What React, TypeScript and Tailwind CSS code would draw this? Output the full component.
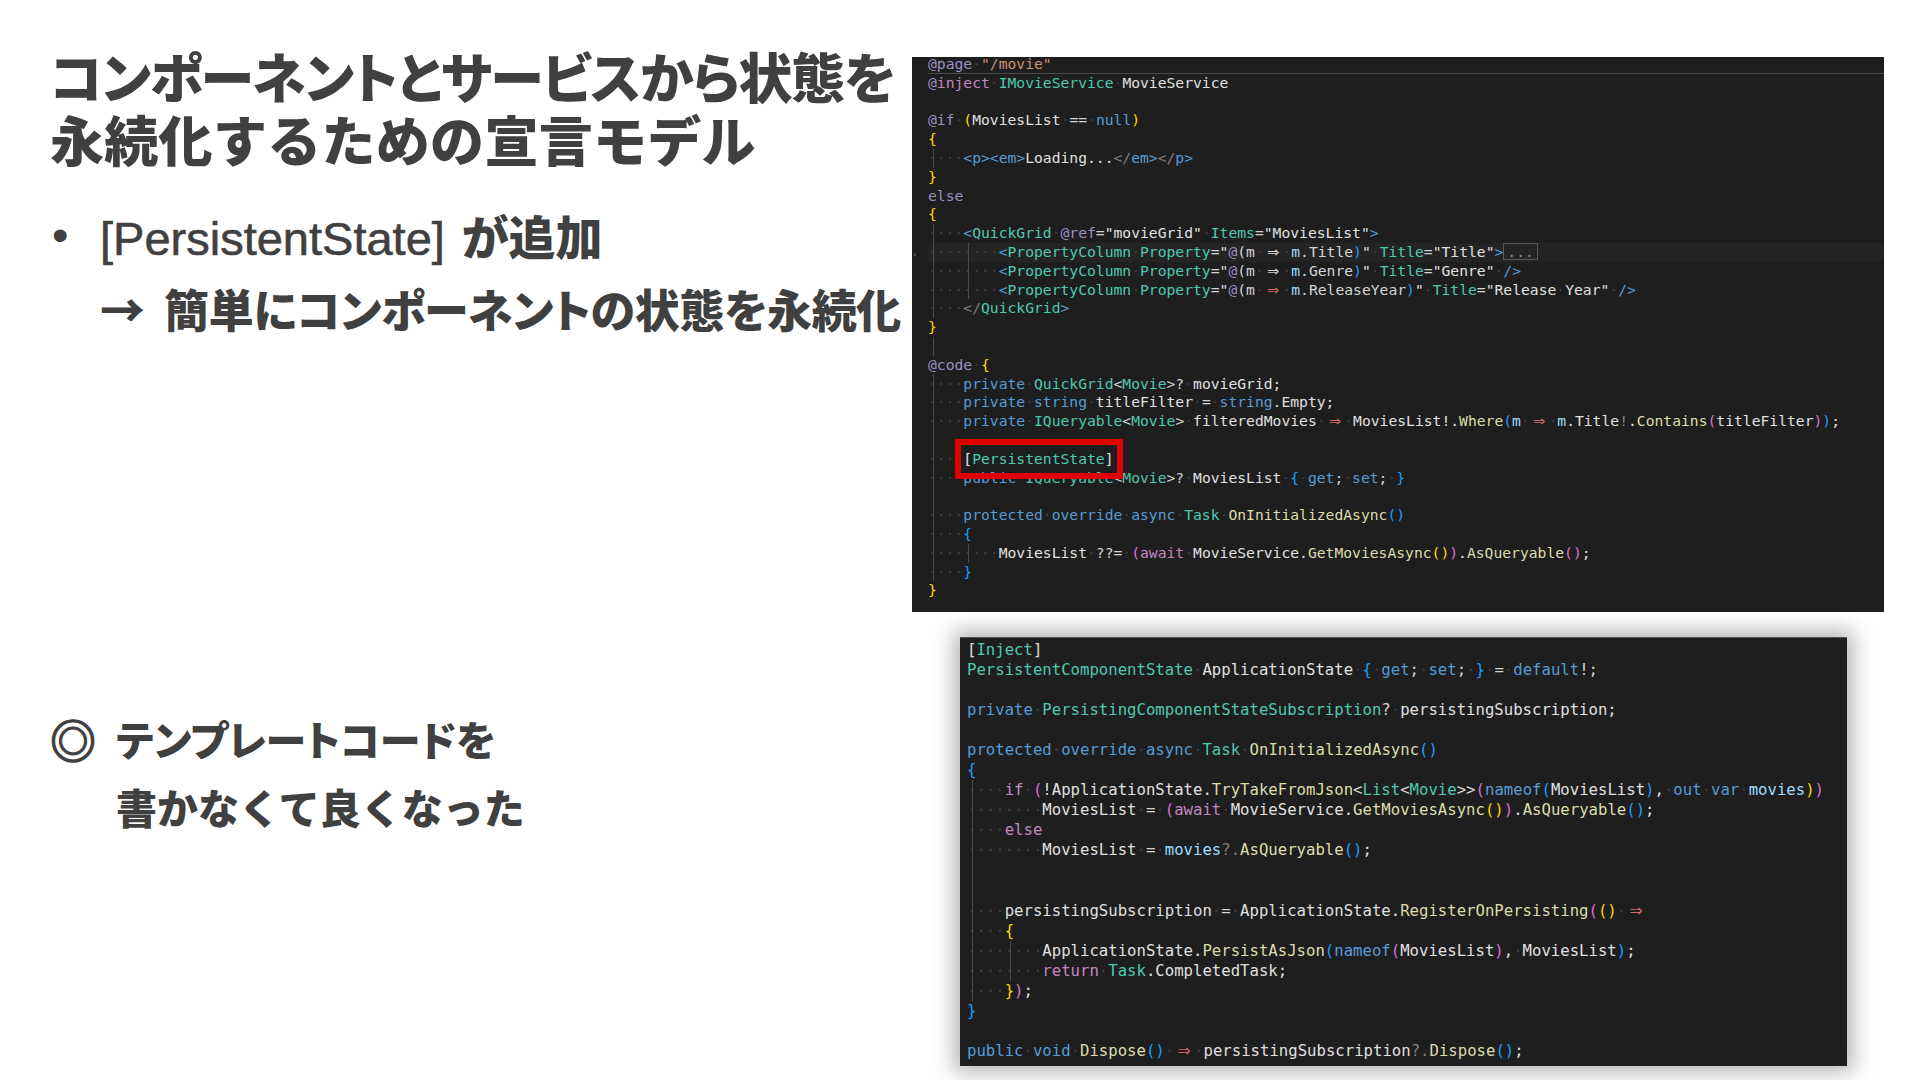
import React from "react";

const kw = "text-[#569cd6]";
const ty = "text-[#4ec9b0]";
const id = "text-[#d4d4d4]";
const fn = "text-[#dcdcaa]";
const va = "text-[#9cdcfe]";
const go = "text-[#ffd700]";
const pu = "text-[#da70d6]";
const bl = "text-[#179fff]";
const ct = "text-[#c586c0]";
const st = "text-[#ce9178]";
const ar = "text-[#d16969]";
const rz = "text-[#9d8fc4]";
const gr = "text-[#808080]";
const wt = "text-[#e0e0e0]";

type Seg = [string, string];
type LineDef = { lv?: number; g?: number; s?: Seg[]; hl?: boolean; box?: boolean; extra?: React.ReactNode };

function Arrow({ c }: { c: string }) {
  return (
    <span className={"inline-block w-[2ch] text-center font-['DejaVu_Sans',sans-serif] " + c}>⇒</span>
  );
}

function Txt({ c, t }: { c: string; t: string }) {
  const parts = t.split(/( +|⇒)/);
  return (
    <>
      {parts.map((p, i) =>
        p === "⇒" ? (
          <Arrow key={i} c={c} />
        ) : p.startsWith(" ") ? (
          <span key={i} className="text-[#3d3d3d]">{"·".repeat(p.length)}</span>
        ) : (
          <span key={i} className={c}>{p}</span>
        )
      )}
    </>
  );
}

function Indent({ guide, dots, offset }: { guide: boolean; dots: boolean; offset: string }) {
  return (
    <span className="relative inline-block w-[4ch] h-full shrink-0 text-[#3d3d3d]">
      {dots ? "····" : ""}
      {guide && <span className={"absolute top-0 bottom-0 w-px bg-[#4a4a4a] " + offset} />}
    </span>
  );
}

function Code({ lines, lh, offset }: { lines: LineDef[]; lh: string; offset: string }) {
  return (
    <>
      {lines.map((l, i) => (
        <div
          key={i}
          className={
            "flex whitespace-pre " + lh + " " +
            (l.hl ? "bg-[#242424] " : "") +
            (l.box ? "border-b border-[#4a4a4a] " : "")
          }
        >
          {Array.from({ length: Math.max(l.lv ?? 0, l.g ?? 0) }).map((_, k) => (
            <Indent key={k} guide={k < (l.g ?? 0)} dots={!!l.s} offset={offset} />
          ))}
          <span>
            {(l.s ?? []).map((s, k) => (
              <Txt key={k} c={s[0]} t={s[1]} />
            ))}
            {l.extra}
          </span>
        </div>
      ))}
    </>
  );
}

const propCol = (name: string, title: string, arrow: string, tail: React.ReactNode): LineDef => ({
  lv: 2,
  g: 2,
  s: [
    [kw, "<"], [ty, "PropertyColumn"], [id, " "], [ty, "Property"], [id, "="], [wt, '"'], [rz, "@"], [id, "("], [id, "m "],
    [arrow, "⇒ "], [va, "m"], [id, "."], [id, name], [bl, ")"], [wt, '" '], [ty, "Title"], [id, "="], [wt, `"${title}"`],
  ],
  extra: tail,
});

const panel1: LineDef[] = [
  { box: true, s: [[rz, "@page "], [st, '"/movie"']] },
  { s: [[rz, "@"], [ct, "inject "], [ty, "IMovieService "], [wt, "MovieService"]] },
  {},
  { s: [[rz, "@if "], [go, "("], [wt, "MoviesList "], [id, "== "], [kw, "null"], [go, ")"]] },
  { s: [[go, "{"]] },
  { lv: 1, g: 1, s: [[kw, "<p><em>"], [wt, "Loading..."], [gr, "</"], [kw, "em>"], [gr, "</"], [kw, "p>"]] },
  { s: [[go, "}"]] },
  { s: [[rz, "else"]] },
  { s: [[go, "{"]] },
  { lv: 1, g: 1, s: [[kw, "<"], [ty, "QuickGrid "], [rz, "@ref"], [id, "="], [wt, '"movieGrid" '], [ty, "Items"], [id, "="], [wt, '"MoviesList"'], [kw, ">"]] },
  {
    ...propCol("Title", "Title", id, (
      <>
        <span className={kw}>{">"}</span>
        <span className="inline-block border border-[#5a5a5a] text-[#8a8a8a] leading-[15px] px-[3px]">...</span>
      </>
    )),
    hl: true,
  },
  propCol("Genre", "Genre", id, <Txt c={kw} t=" />" />),
  propCol("ReleaseYear", "Release Year", ar, <Txt c={kw} t=" />" />),
  { lv: 1, g: 1, s: [[gr, "</"], [ty, "QuickGrid"], [kw, ">"]] },
  { s: [[go, "}"]] },
  { g: 1 },
  { s: [[rz, "@code "], [go, "{"]] },
  { lv: 1, g: 1, s: [[kw, "private "], [ty, "QuickGrid"], [id, "<"], [ty, "Movie"], [id, ">? "], [wt, "movieGrid;"]] },
  { lv: 1, g: 1, s: [[kw, "private string "], [wt, "titleFilter "], [id, "= "], [kw, "string"], [id, "."], [wt, "Empty;"]] },
  {
    lv: 1,
    g: 1,
    s: [
      [kw, "private "], [ty, "IQueryable"], [id, "<"], [ty, "Movie"], [id, "> "], [wt, "filteredMovies "], [ar, "⇒ "],
      [wt, "MoviesList!."], [fn, "Where"], [bl, "("], [va, "m "], [ar, "⇒ "], [va, "m"], [wt, ".Title"], [gr, "!"], [wt, "."],
      [fn, "Contains"], [pu, "("], [wt, "titleFilter"], [pu, ")"], [bl, ")"], [wt, ";"],
    ],
  },
  { g: 1 },
  { lv: 1, g: 1, s: [[wt, "["], [ty, "PersistentState"], [wt, "]"]] },
  { lv: 1, g: 1, s: [[kw, "public "], [ty, "IQueryable"], [id, "<"], [ty, "Movie"], [id, ">? "], [wt, "MoviesList "], [bl, "{ "], [kw, "get"], [id, "; "], [kw, "set"], [id, "; "], [bl, "}"]] },
  { g: 1 },
  { lv: 1, g: 1, s: [[kw, "protected override async "], [ty, "Task "], [fn, "OnInitializedAsync"], [bl, "()"]] },
  { lv: 1, g: 1, s: [[bl, "{"]] },
  {
    lv: 2,
    g: 2,
    s: [
      [wt, "MoviesList "], [id, "??= "], [pu, "("], [ct, "await "], [wt, "MovieService."], [fn, "GetMoviesAsync"], [go, "()"], [pu, ")"],
      [wt, "."], [fn, "AsQueryable"], [pu, "()"], [wt, ";"],
    ],
  },
  { lv: 1, g: 1, s: [[bl, "}"]] },
  { s: [[go, "}"]] },
];

const panel2: LineDef[] = [
  { s: [[wt, "["], [ty, "Inject"], [wt, "]"]] },
  { s: [[ty, "PersistentComponentState "], [wt, "ApplicationState "], [bl, "{ "], [kw, "get"], [id, "; "], [kw, "set"], [id, "; "], [bl, "} "], [id, "= "], [kw, "default"], [id, "!;"]] },
  {},
  { s: [[kw, "private "], [ty, "PersistingComponentStateSubscription"], [id, "? "], [wt, "persistingSubscription;"]] },
  {},
  { s: [[kw, "protected override async "], [ty, "Task "], [fn, "OnInitializedAsync"], [bl, "()"]] },
  { s: [[bl, "{"]] },
  {
    lv: 1,
    g: 1,
    s: [
      [ct, "if "], [pu, "("], [wt, "!ApplicationState."], [fn, "TryTakeFromJson"], [id, "<"], [ty, "List"], [id, "<"], [ty, "Movie"], [id, ">>"],
      [pu, "("], [kw, "nameof"], [bl, "("], [wt, "MoviesList"], [bl, ")"], [wt, ", "], [kw, "out var "], [va, "movies"], [go, ")"], [pu, ")"],
    ],
  },
  {
    lv: 2,
    g: 1,
    s: [
      [wt, "MoviesList "], [id, "= "], [pu, "("], [ct, "await "], [wt, "MovieService."], [fn, "GetMoviesAsync"], [go, "()"], [pu, ")"],
      [wt, "."], [fn, "AsQueryable"], [bl, "()"], [wt, ";"],
    ],
  },
  { lv: 1, g: 1, s: [[ct, "else"]] },
  { lv: 2, g: 1, s: [[wt, "MoviesList "], [id, "= "], [va, "movies"], [gr, "?."], [fn, "AsQueryable"], [bl, "()"], [wt, ";"]] },
  { g: 1 },
  { g: 1 },
  { lv: 1, g: 1, s: [[wt, "persistingSubscription "], [id, "= "], [wt, "ApplicationState."], [fn, "RegisterOnPersisting"], [pu, "("], [go, "() "], [ar, "⇒"]] },
  { lv: 1, g: 1, s: [[go, "{"]] },
  { lv: 2, g: 2, s: [[wt, "ApplicationState."], [fn, "PersistAsJson"], [bl, "("], [kw, "nameof"], [pu, "("], [wt, "MoviesList"], [pu, ")"], [wt, ", MoviesList"], [bl, ")"], [wt, ";"]] },
  { lv: 2, g: 2, s: [[ct, "return "], [ty, "Task"], [wt, ".CompletedTask;"]] },
  { lv: 1, g: 1, s: [[go, "}"], [pu, ")"], [wt, ";"]] },
  { s: [[bl, "}"]] },
  {},
  { s: [[kw, "public void "], [fn, "Dispose"], [bl, "() "], [ar, "⇒ "], [wt, "persistingSubscription"], [gr, "?."], [fn, "Dispose"], [bl, "()"], [wt, ";"]] },
];

const jp = "font-['Noto_Sans_CJK_JP',sans-serif]";
const palt = "[font-feature-settings:'palt']";

export default function App() {
  return (
    <div className="w-[1920px] h-[1080px] bg-white flex overflow-hidden">
      <div className={"w-[912px] shrink-0 pl-[50px] pt-[44px] text-[#404040] whitespace-nowrap " + jp}>
        <h1 className="text-[54px] leading-[63px] font-black">
          <span className={"block tracking-[-1.2px] " + palt}>コンポーネントとサービスから状態を</span>
          <span className="block tracking-[0.3px]">永続化するための宣言モデル</span>
        </h1>
        <div className={"mt-[30px] leading-[70px] font-black " + palt}>
          <div className="flex text-[47px]">
            <span className="w-[50px] font-['Liberation_Sans',sans-serif] font-normal pl-[2px]">•</span>
            <span>
              <span className="mr-[6px] font-['Liberation_Sans',sans-serif] font-normal [-webkit-text-stroke:0.6px_#404040]">[PersistentState]</span> が追加
            </span>
          </div>
          <div className="flex pl-[50px] text-[45px]">
            <span className="w-[64px] [font-feature-settings:normal]">→</span>
            <span className="tracking-[-0.3px]">簡単にコンポーネントの状態を永続化</span>
          </div>
        </div>
        <div className="mt-[360px] text-[41px] leading-[68px] font-black flex">
          <span className="w-[66px] shrink-0 text-[46px] [-webkit-text-stroke:1.2px_#404040]">◎</span>
          <div>
            <div className={palt}>テンプレートコードを</div>
            <div>書かなくて良くなった</div>
          </div>
        </div>
      </div>

      <div className="flex-1 pt-[57px] font-['DejaVu_Sans_Mono',monospace]">
        <div className="relative w-[972px] h-[555px] bg-[#1e1e1e] overflow-hidden pl-[16px] text-[14.68px]">
          <div className="-mt-[2px]">
            <Code lines={panel1} lh="h-[18.8px] leading-[18.8px]" offset="left-[5px]" />
          </div>
          <div className="absolute left-[43px] top-[382px] w-[168px] h-[40px] border-[6px] border-[#e00000]" />
          <span className="absolute left-[0px] top-[192px] text-[9px] text-[#777] leading-[10px]">›</span>
        </div>
        <div className="ml-[48px] mt-[25px] w-[887px] h-[429px] bg-[#1e1e1e] border-t border-[#555] overflow-hidden pl-[7px] pt-[2px] text-[15.65px] shadow-[0_0_20px_6px_rgba(0,0,0,0.3)]">
          <Code lines={panel2} lh="h-[20.05px] leading-[20.05px]" offset="left-[5px]" />
        </div>
      </div>
    </div>
  );
}
